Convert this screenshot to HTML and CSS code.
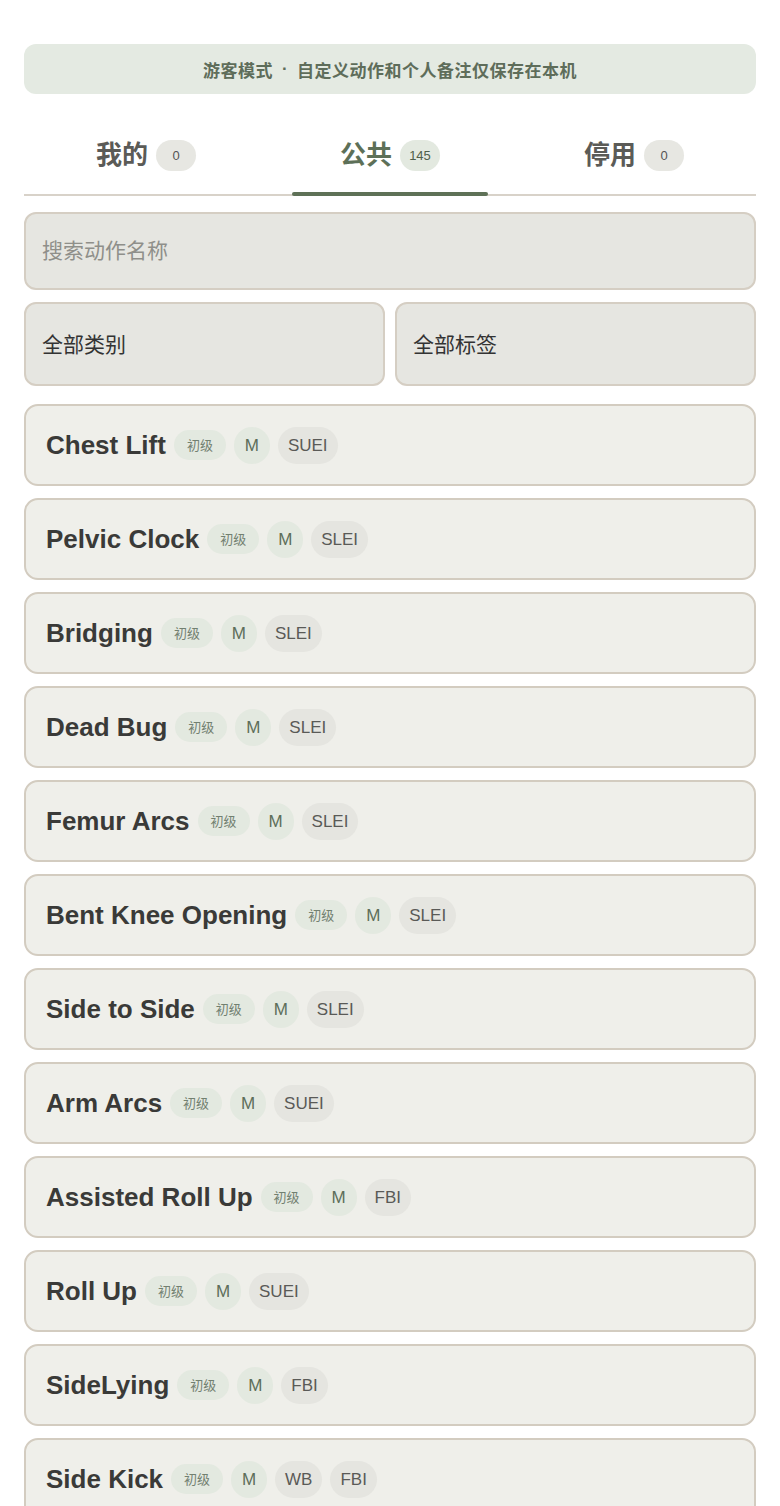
FILE: index.html
```html
<!DOCTYPE html>
<html lang="zh-CN">
<head>
    <meta charset="UTF-8">
    <meta name="viewport" content="width=device-width, initial-scale=1.0">
    <title>动作库</title>
    <link rel="stylesheet" href="styles.css">
</head>
<body>
    <div class="container">
        <div class="guest-banner">游客模式<span class="dot">·</span>自定义动作和个人备注仅保存在本机</div>

        <div class="tabs">
            <div class="tab">我的 <span class="count">0</span></div>
            <div class="tab active">公共 <span class="count">145</span></div>
            <div class="tab">停用 <span class="count">0</span></div>
        </div>

        <input type="text" class="search" placeholder="搜索动作名称">

        <div class="filters">
            <select class="filter">
                <option>全部类别</option>
            </select>
            <select class="filter">
                <option>全部标签</option>
            </select>
        </div>

        <div class="list">
            <div class="card"><span class="name">Chest Lift</span><span class="level">初级</span><span class="tag green">M</span><span class="tag">SUEI</span></div>
            <div class="card"><span class="name">Pelvic Clock</span><span class="level">初级</span><span class="tag green">M</span><span class="tag">SLEI</span></div>
            <div class="card"><span class="name">Bridging</span><span class="level">初级</span><span class="tag green">M</span><span class="tag">SLEI</span></div>
            <div class="card"><span class="name">Dead Bug</span><span class="level">初级</span><span class="tag green">M</span><span class="tag">SLEI</span></div>
            <div class="card"><span class="name">Femur Arcs</span><span class="level">初级</span><span class="tag green">M</span><span class="tag">SLEI</span></div>
            <div class="card"><span class="name">Bent Knee Opening</span><span class="level">初级</span><span class="tag green">M</span><span class="tag">SLEI</span></div>
            <div class="card"><span class="name">Side to Side</span><span class="level">初级</span><span class="tag green">M</span><span class="tag">SLEI</span></div>
            <div class="card"><span class="name">Arm Arcs</span><span class="level">初级</span><span class="tag green">M</span><span class="tag">SUEI</span></div>
            <div class="card"><span class="name">Assisted Roll Up</span><span class="level">初级</span><span class="tag green">M</span><span class="tag">FBI</span></div>
            <div class="card"><span class="name">Roll Up</span><span class="level">初级</span><span class="tag green">M</span><span class="tag">SUEI</span></div>
            <div class="card"><span class="name">SideLying</span><span class="level">初级</span><span class="tag green">M</span><span class="tag">FBI</span></div>
            <div class="card"><span class="name">Side Kick</span><span class="level">初级</span><span class="tag green">M</span><span class="tag">WB</span><span class="tag">FBI</span></div>
        </div>
    </div>
</body>
</html>
```

FILE: styles.css
```css
body {
    font-family: "Liberation Sans", "Noto Sans CJK SC", sans-serif;
    margin: 0;
    padding: 0;
    background-color: #fff;
    color: #3b3b39;
}
.container {
    padding: 44px 24px 0;
}
.guest-banner {
    height: 50px;
    display: flex;
    align-items: center;
    justify-content: center;
    background-color: #e4eae2;
    border-radius: 12px;
    color: #5e6d5a;
    font-size: 17px;
    font-weight: bold;
    letter-spacing: 0.5px;
}
.guest-banner .dot {
    margin: 0 9px;
}
.tabs {
    display: flex;
    margin-top: 24px;
    border-bottom: 2px solid #d8d2c9;
}
.tab {
    flex: 1;
    position: relative;
    display: flex;
    align-items: center;
    justify-content: center;
    gap: 8px;
    height: 32px;
    line-height: 32px;
    padding: 21px 0 23px;
    font-size: 26px;
    font-weight: bold;
    color: #5b5b57;
}
.tab .count {
    min-width: 40px;
    height: 31px;
    padding: 0 9px;
    box-sizing: border-box;
    display: inline-flex;
    align-items: center;
    justify-content: center;
    border-radius: 16px;
    background-color: #e7e7e2;
    font-size: 13px;
    line-height: 1;
    font-weight: normal;
    color: #555;
}
.tab.active {
    color: #5d7058;
}
.tab.active .count {
    background-color: #e3e9e0;
    color: #4f5f4b;
}
.tab.active::after {
    content: "";
    position: absolute;
    left: 10%;
    width: 80%;
    bottom: -2px;
    height: 4px;
    border-radius: 2px;
    background-color: #5e7157;
}
.search, .filter {
    display: block;
    width: 100%;
    box-sizing: border-box;
    border: 2px solid #d5cec3;
    border-radius: 12px;
    background-color: #e6e6e1;
    font-family: "Liberation Sans", "Noto Sans CJK SC", sans-serif;
    font-size: 21px;
    color: #333;
    padding: 0 16px;
    appearance: none;
    -webkit-appearance: none;
    outline: none;
}
.search {
    margin-top: 16px;
    height: 78px;
}
.search::placeholder {
    color: #8f8f8a;
}
.filters {
    display: flex;
    gap: 10px;
    margin-top: 12px;
}
.filter {
    height: 84px;
}
.list {
    display: flex;
    flex-direction: column;
    gap: 12px;
    margin-top: 18px;
}
.card {
    height: 82px;
    box-sizing: border-box;
    display: flex;
    align-items: center;
    gap: 8px;
    padding: 0 20px;
    background-color: #efefea;
    border: 2px solid #d3ccc0;
    border-radius: 14px;
}
.name {
    font-size: 26px;
    font-weight: bold;
    color: #3a3a38;
}
.level {
    height: 30px;
    padding: 0 13px;
    display: inline-flex;
    align-items: center;
    border-radius: 15px;
    background-color: #e3e9e0;
    color: #728070;
    font-size: 13px;
    line-height: 1;
}
.tag {
    height: 37px;
    min-width: 36px;
    box-sizing: border-box;
    padding: 0 10px;
    display: inline-flex;
    align-items: center;
    justify-content: center;
    border-radius: 19px;
    background-color: #e5e5e0;
    color: #5a5a57;
    font-size: 17px;
    line-height: 1;
}
.tag.green {
    background-color: #e3e9e0;
    color: #5d6e5a;
}
```
